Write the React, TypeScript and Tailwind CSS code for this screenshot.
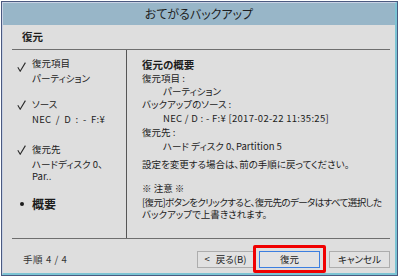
import React from "react";

function Check() {
  return (
    <svg width="9" height="10" viewBox="0 0 9 10" className="block">
      <path d="M0.8 5.2 L3.2 9.2 L8.4 0.6" fill="none" stroke="#2a2a2a" strokeWidth="1.1" />
    </svg>
  );
}

export default function App() {
  return (
    <div className="w-[400px] h-[277px] bg-white pl-px pt-px font-['Noto_Sans_CJK_JP',sans-serif] [font-feature-settings:'palt'] text-[#1c1c1c] whitespace-nowrap">
      <div className="w-[397px] h-[275px] border border-[#4b5a80]">
        <div className="w-full h-full flex flex-col border-l border-t border-[#c9d2e4] border-r-2 border-b-2 border-r-[#7cc4d4] border-b-[#7cc4d4]">
          {/* title bar */}
          <div className="h-[22px] bg-[#98b6c8] flex items-center justify-center text-[12px] leading-[22px] text-[#1e1e1e]">
            おてがるバックアップ
          </div>
          {/* content */}
          <div className="flex-1 bg-[#dedede] pl-[9px] pr-[5px] flex flex-col">
            <div className="h-[25px] border-b border-[#6e6e6e] pl-[10px] flex items-center text-[10.5px] font-bold leading-[14px]">
              復元
            </div>
            <div className="h-[189px] border-b border-[#6e6e6e] flex">
              {/* left steps */}
              <div className="w-[115px] shrink-0 border-r border-[#555] pl-[5px] pt-[7px] text-[9.5px]">
                <div className="flex">
                  <div className="w-[15px] pt-[5px]"><Check /></div>
                  <div>
                    <div className="leading-[13px]">復元項目</div>
                    <div className="leading-[13px] mt-[2px]">パーティション</div>
                  </div>
                </div>
                <div className="flex mt-[13px]">
                  <div className="w-[15px] pt-[2px]"><Check /></div>
                  <div>
                    <div className="leading-[13px]">ソース</div>
                    <div className="leading-[13px] mt-[2px] tracking-[0.3px] [word-spacing:2px]">NEC / D : - F:¥</div>
                  </div>
                </div>
                <div className="flex mt-[17px]">
                  <div className="w-[15px] pt-[2px]"><Check /></div>
                  <div>
                    <div className="leading-[13px]">復元先</div>
                    <div className="leading-[12px] mt-[2px]">ハードディスク 0、</div>
                    <div className="leading-[12px]">Par..</div>
                  </div>
                </div>
                <div className="flex items-center mt-[15px] h-[14px]">
                  <div className="w-[15px] flex pl-[3px]">
                    <div className="w-[4px] h-[4px] rounded-full bg-[#1c1c1c]" />
                  </div>
                  <div className="text-[12px] font-bold leading-[14px]">概要</div>
                </div>
              </div>
              {/* right summary */}
              <div className="flex-1 min-w-0 pl-[15px] pt-[8px] text-[9.5px]">
                <div className="leading-[13px] text-[10.5px] font-bold">復元の概要</div>
                <div className="leading-[13px] mt-[1px]">復元項目 :</div>
                <div className="leading-[13px] pl-[21px]">パーティション</div>
                <div className="leading-[13px]">バックアップのソース :</div>
                <div className="leading-[13px] mt-[1px] pl-[21px] tracking-[0.3px]">NEC / D : - F:¥ [2017-02-22 11:35:25]</div>
                <div className="leading-[13px] mt-[1px]">復元先 :</div>
                <div className="leading-[13px] mt-[1px] pl-[21px]">ハード ディスク 0、Partition 5</div>
                <div className="leading-[13px] mt-[5px]">設定を変更する場合は、前の手順に戻ってください。</div>
                <div className="leading-[13px] mt-[11px]">※ 注意 ※</div>
                <div className="leading-[12px] mt-[1px] tracking-[-0.6px]">[復元]ボタンをクリックすると、復元先のデータはすべて選択した</div>
                <div className="leading-[12px]">バックアップで上書きされます。</div>
              </div>
            </div>
            {/* footer */}
            <div className="flex items-center pt-[12px] pl-[11px] text-[9.5px]">
              <div className="flex-1 leading-[17px] text-[#333] tracking-[0.6px]">手順 4 / 4</div>
              <button className="w-[57px] h-[17px] border border-[#adadad] bg-[#e1e1e1] text-[9.5px] leading-[15px] flex items-center justify-center gap-[6px]">
                <span>&lt;</span><span>戻る(B)</span>
              </button>
              <div className="relative ml-[5px]">
                <button className="w-[61px] h-[17px] border border-[#3c7fe0] bg-[#e3e3e3] text-[9.5px] leading-[15px] flex items-center justify-center">
                  復元
                </button>
                <div className="absolute -left-[6px] -right-[6px] -top-[6px] -bottom-[5px] border-[3px] border-[#f00000] rounded-[2px] pointer-events-none" />
              </div>
              <button className="ml-[9px] w-[61px] h-[17px] border border-[#adadad] bg-[#e1e1e1] text-[9.5px] leading-[15px] flex items-center justify-center">
                キャンセル
              </button>
            </div>
          </div>
        </div>
      </div>
    </div>
  );
}
